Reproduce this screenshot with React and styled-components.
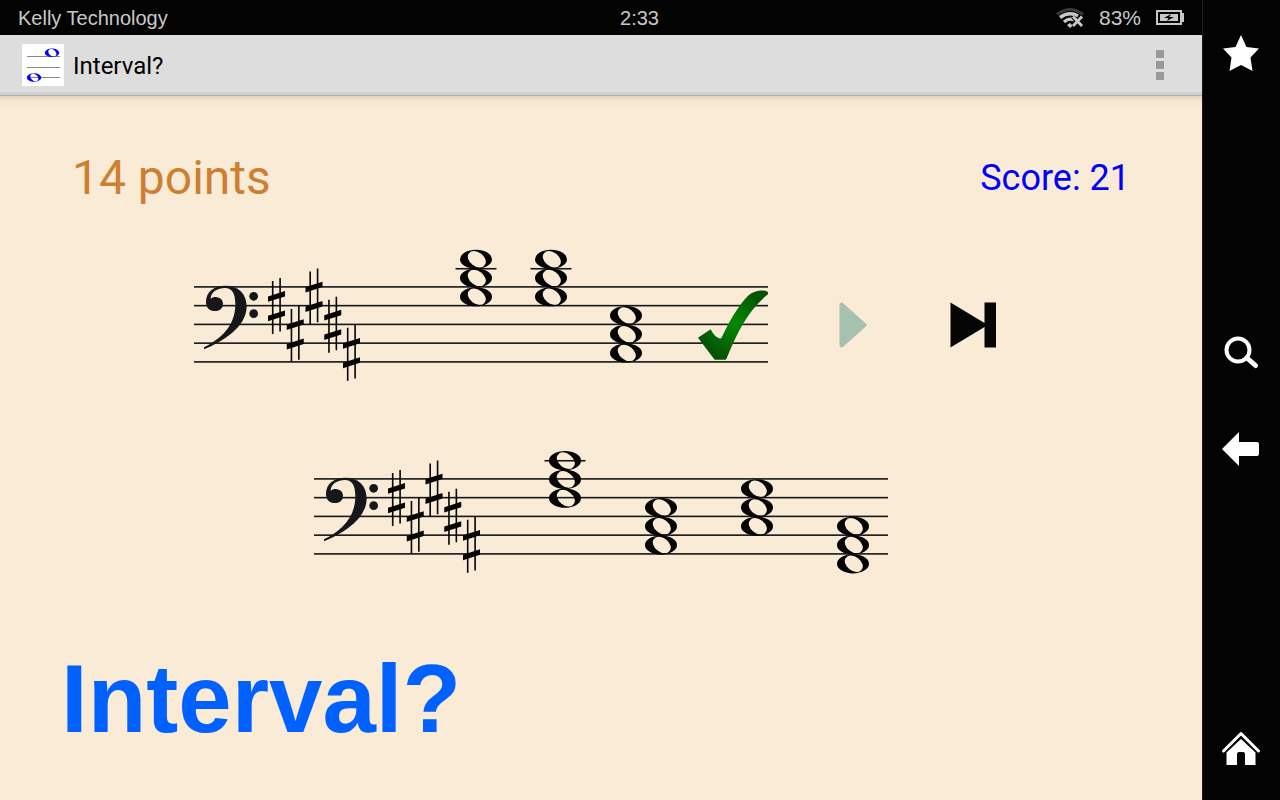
import styled, { createGlobalStyle } from "styled-components";

const STEP = 9.375;
const STAFF_LINES = [0, 2, 4, 6, 8];
const KEY_SHARPS = [2, 5, 1, 4, 7];

const question = [
    { x: 282, top: -3 },
    { x: 357, top: -3 },
    { x: 432, top: 3 },
];

const answer = [
    { x: 251, top: -2 },
    { x: 347, top: 3 },
    { x: 443, top: 1 },
    { x: 539, top: 5 },
];

const WholeNote = ({ x, y, size = 1, color = "#050505" }) => (
    <path
        transform={`translate(${x} ${y}) scale(${size})`}
        fill={color}
        fillRule="evenodd"
        d="M-16 0A16 9.6 0 1 1 16 0A16 9.6 0 1 1 -16 0Z M-6.900 -6A9.8 6.4 38 1 1 8.5 6A9.8 6.4 38 1 1 -6.900 -6Z"
    />
);

const Sharp = ({ x, y }) => (
    <g transform={`translate(${x} ${y})`} fill="#050505">
        <path d="M-4.6 -25.3h1.6v53h-1.6z M2.8 -28.3h1.6v53.6h-1.6z" />
        <path d="M-8.5 -9.8L8.5 -15.2v5.4L-8.5 -4.4z M-8.5 9.6L8.5 4.2v5.4L-8.5 15z" />
    </g>
);

const BassClef = () => (
    <g transform="translate(-4 -46.7) scale(0.3333)" fill="#15171a">
        <path d="M42 321C92 296 136 258 136 192C136 158 126 143 105 143C82 143 62 155 62 176C66 171 71 169 76 170C91 171 99 179 99 191C99 204 89 212 75 212C58 212 48 202 48 184C48 154 72 136 107 136C146 136 170 160 170 200C168 260 102 302 42 327Z" />
        <circle cx="191" cy="168" r="13" />
        <circle cx="191" cy="220" r="13" />
    </g>
);

const Tick = () => (
    <g transform="translate(486 -17) scale(0.3333)">
        <defs>
            <radialGradient id="tick" gradientUnits="userSpaceOnUse" cx="162" cy="160" r="105">
                <stop offset="0" stopColor="#058a05" />
                <stop offset="1" stopColor="#055405" />
            </radialGradient>
        </defs>
        <path
            fill="url(#tick)"
            d="M54 203L92 178C100 194 112 207 124 205C145 160 175 105 206 76C222 60 258 57 264 67V73C210 115 176 175 140 265L137 269H104Z"
        />
    </g>
);

const Staff = ({ label, chords, correct }) => (
    <StaffSvg viewBox="0 -40 574 140" role="img" aria-label={label}>
        {STAFF_LINES.map((step) => (
            <rect key={step} x="0" y={step * STEP - 0.9} width="574" height="1.6" fill="#15171a" />
        ))}
        <BassClef />
        {KEY_SHARPS.map((step, i) => (
            <Sharp key={step} x={82.5 + i * 18.75} y={step * STEP + 0.5} />
        ))}
        {chords.map(({ x, top }) => (
            <g key={x}>
                {top < -1 && <rect x={x - 20.5} y={-2 * STEP - 0.3} width="41" height="1.6" fill="#15171a" />}
                {[0, 2, 4].map((third) => (
                    <WholeNote key={third} x={x} y={(top + third) * STEP + 0.4} />
                ))}
            </g>
        ))}
        {correct && <Tick />}
    </StaffSvg>
);

const WifiIcon = () => (
    <svg width="28" height="20" viewBox="0 0 28 20" fill="none" aria-label="Wi-Fi">
        <path d="M1 6.5Q14 -3.5 27 6.5" stroke="#3a3a3a" strokeWidth="3" />
        <path d="M4 9.5Q13 3 22 8" stroke="#c8c8c8" strokeWidth="3.4" />
        <path d="M8 14Q13 9.5 18 12" stroke="#c8c8c8" strokeWidth="3.2" />
        <path d="M11 17L14 15L17 17.5L14 20Z" fill="#c8c8c8" />
        <path d="M17 9L26 18M26 9L17 18" stroke="#050505" strokeWidth="4.4" />
        <path d="M17 8.5L26 18M26 8.5L17 18" stroke="#c8c8c8" strokeWidth="2.8" />
    </svg>
);

const BatteryIcon = () => (
    <svg width="28" height="16" viewBox="0 0 28 16" aria-label="Battery charging">
        <rect x="1" y="1" width="24" height="13" fill="none" stroke="#c8c8c8" strokeWidth="2" />
        <rect x="26" y="3" width="2" height="9" fill="#c8c8c8" />
        <rect x="4" y="4" width="18" height="7" fill="#c8c8c8" />
        <path d="M15 4L8 8H12.5L11 11L18 7H13.5Z" fill="#050505" />
    </svg>
);

const AppIcon = () => (
    <svg width="42" height="42" viewBox="0 0 42 42" aria-hidden="true">
        <rect width="42" height="42" fill="#fff" />
        <path d="M5 12.5H38M5 23.5H38M5 33.5H38" stroke="#888" strokeWidth="1" />
        <WholeNote x={30} y={8.7} size={0.45} color="#0000ff" />
        <WholeNote x={12} y={33.5} size={0.45} color="#0000ff" />
    </svg>
);

const App = () => {
    return (
        <>
            <GlobalStyle />
            <Screen>
                <Main>
                    <StatusBar>
                        <span>Kelly Technology</span>
                        <Clock>2:33</Clock>
                        <StatusIcons>
                            <WifiIcon />
                            <BatteryLevel>83%</BatteryLevel>
                            <BatteryIcon />
                        </StatusIcons>
                    </StatusBar>
                    <ActionBar>
                        <AppIcon />
                        <AppTitle>Interval?</AppTitle>
                        <OverflowButton aria-label="More options">
                            <Square />
                            <Square />
                            <Square />
                        </OverflowButton>
                    </ActionBar>
                    <Content>
                        <ScoreRow>
                            <Points>14 points</Points>
                            <Score>Score: 21</Score>
                        </ScoreRow>
                        <QuestionRow>
                            <Staff label="Question" chords={question} correct />
                            <Controls>
                                <ControlButton aria-label="Play">
                                    <svg width="28" height="46" viewBox="0 0 28 46" aria-hidden="true">
                                        <path d="M2.5 2.5V43.5L25.5 23Z" fill="#a6c1af" stroke="#a6c1af" strokeWidth="4" strokeLinejoin="round" />
                                    </svg>
                                </ControlButton>
                                <ControlButton aria-label="Next">
                                    <svg width="46" height="46" viewBox="0 0 46 46" aria-hidden="true">
                                        <path d="M0.5 0.5L34.5 21V0.5H46V45.5H34.5V25L0.5 45.5Z" fill="#050505" />
                                    </svg>
                                </ControlButton>
                            </Controls>
                        </QuestionRow>
                        <AnswerRow>
                            <Staff label="Answer" chords={answer} />
                        </AnswerRow>
                        <Heading>Interval?</Heading>
                    </Content>
                </Main>
                <SideBar>
                    <NavButton aria-label="Favorites">
                        <svg width="36" height="36" viewBox="0 0 36 36" aria-hidden="true">
                            <path d="M18 0L23.5 12L36 13.5L27.5 22.5L29.5 36L18 30L6.5 36L8.5 22.5L0 13.5L12.5 12Z" fill="#fff" />
                        </svg>
                    </NavButton>
                    <NavGroup>
                        <NavButton aria-label="Search">
                            <svg width="36" height="34" viewBox="0 0 36 34" fill="none" stroke="#fff" aria-hidden="true">
                                <circle cx="15" cy="14" r="11.5" strokeWidth="4" />
                                <path d="M24 22L32.5 29.5" strokeWidth="5" strokeLinecap="round" />
                            </svg>
                        </NavButton>
                        <NavButton aria-label="Back">
                            <svg width="37" height="34" viewBox="0 0 37 34" aria-hidden="true">
                                <path d="M0 17L17 0V10H35Q37 10 37 12V22Q37 24 35 24H17V34Z" fill="#fff" />
                            </svg>
                        </NavButton>
                    </NavGroup>
                    <NavButton aria-label="Home">
                        <svg width="40" height="34" viewBox="0 0 40 34" aria-hidden="true">
                            <path d="M2.5 20L20 2.5L37.5 20" fill="none" stroke="#fff" strokeWidth="3" strokeLinecap="round" strokeLinejoin="round" />
                            <path d="M20 8L34.5 21.5V34H24V23Q24 21 22 21H18Q16 21 16 23V34H5.5V21.5Z" fill="#fff" />
                        </svg>
                    </NavButton>
                </SideBar>
            </Screen>
        </>
    );
};

export default App;

// styled components

const GlobalStyle = createGlobalStyle`
    * {
        box-sizing: border-box;
    }

    body {
        margin: 0;
        font-family: Roboto, "Liberation Sans", sans-serif;
        background-color: #faebd7;
    }

    button {
        padding: 0;
        border: none;
        background: none;
        cursor: pointer;
    }

    svg {
        display: block;
    }
`;

const Screen = styled.div`
    display: flex;
    min-height: 100vh;
`;

const Main = styled.div`
    display: flex;
    flex-direction: column;
    flex: 1;
    min-width: 0;
`;

const StatusBar = styled.header`
    display: grid;
    grid-template-columns: 1fr auto 1fr;
    align-items: center;
    height: 35px;
    padding: 0 18px;
    background-color: #030303;
    color: #c8c8c8;
    font-family: "Liberation Sans", Arial, sans-serif;
    font-size: 20px;
    line-height: 24px;
`;

const Clock = styled.time`
    padding-left: 77px;
`;

const StatusIcons = styled.div`
    display: flex;
    align-items: center;
    justify-content: flex-end;
    gap: 15px;
`;

const BatteryLevel = styled.span`
    font-size: 21px;
`;

const ActionBar = styled.div`
    display: flex;
    align-items: center;
    height: 61px;
    padding: 0 26px 0 22px;
    background-color: #dddddd;
    border-bottom: 1px solid #b3aca5;
    box-shadow: inset 0 -3px 0 #d0d0d0;
`;

const AppTitle = styled.span`
    flex: 1;
    padding-top: 2px;
    margin-left: 9px;
    font-size: 24px;
    line-height: 28px;
    color: #000;
`;

const OverflowButton = styled.button`
    display: flex;
    flex-direction: column;
    align-items: center;
    justify-content: center;
    gap: 3px;
    width: 32px;
    height: 48px;
`;

const Square = styled.span`
    width: 8px;
    height: 8px;
    background-color: #999;
`;

const Content = styled.main`
    display: flex;
    flex-direction: column;
    flex: 1;
    padding: 54px 0 40px;
    background: linear-gradient(#e3d4c2, #f5e6d2 5px, #faebd7 12px);
`;

const ScoreRow = styled.div`
    display: flex;
    align-items: center;
    justify-content: space-between;
    padding: 0 72px;
`;

const Points = styled.span`
    font-size: 48px;
    line-height: 56px;
    color: #cd7f32;
`;

const Score = styled.span`
    font-size: 36px;
    line-height: 42px;
    color: #0000ff;
`;

const QuestionRow = styled.div`
    display: flex;
    justify-content: center;
    align-items: center;
    gap: 25px;
    margin-top: 41px;
    padding-left: 25px;
`;

const AnswerRow = styled.div`
    display: flex;
    justify-content: center;
    margin-top: 52px;
`;

const StaffSvg = styled.svg`
    width: 574px;
    height: 140px;
`;

const Controls = styled.div`
    display: flex;
    padding-top: 16px;
`;

const ControlButton = styled.button`
    display: flex;
    align-items: center;
    justify-content: center;
    width: 120px;
    height: 80px;
`;

const Heading = styled.h1`
    margin: 65px 0 0 61px;
    font-family: "Liberation Sans", Arial, sans-serif;
    font-size: 96px;
    font-weight: bold;
    line-height: 110px;
    color: #0061ff;
`;

const SideBar = styled.nav`
    display: flex;
    flex-direction: column;
    justify-content: space-between;
    width: 78px;
    padding: 5px 2px 4px 0;
    background-color: #030303;
    border-left: 1px solid #1c1c1c;
`;

const NavGroup = styled.div`
    display: flex;
    flex-direction: column;
`;

const NavButton = styled.button`
    display: flex;
    align-items: center;
    justify-content: center;
    width: 100%;
    height: 96px;
`;
